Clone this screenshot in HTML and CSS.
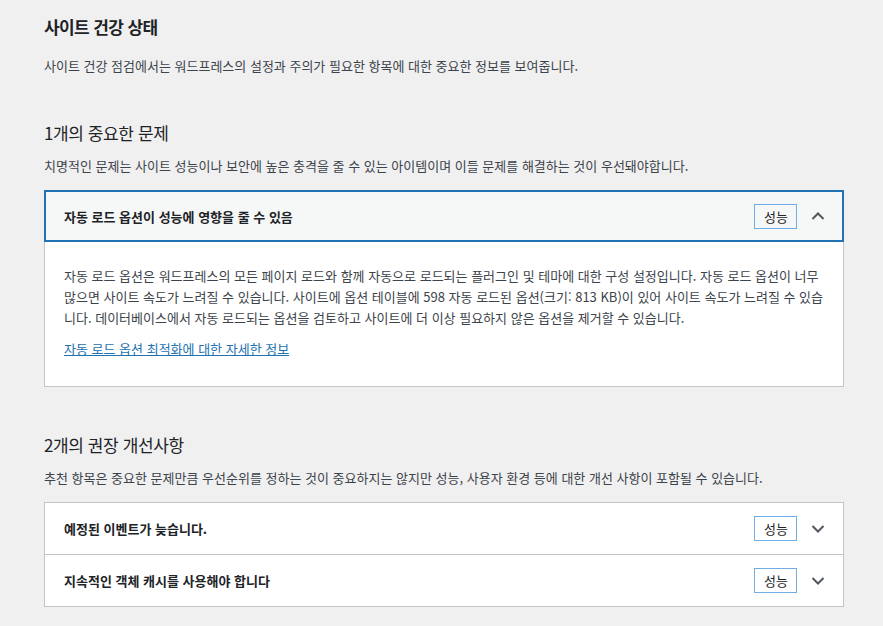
FILE: index.html
```html
<!DOCTYPE html>
<html lang="ko">
<head>
	<meta charset="UTF-8">
	<title>사이트 건강 상태</title>
	<link rel="stylesheet" href="styles.css">
</head>
<body>
	<div class="wrap">
		<h1 class="page-title">사이트 건강 상태</h1>
		<p class="intro">사이트 건강 점검에서는 워드프레스의 설정과 주의가 필요한 항목에 대한 중요한 정보를 보여줍니다.</p>

		<h2 class="section-title">1개의 중요한 문제</h2>
		<p class="section-desc">치명적인 문제는 사이트 성능이나 보안에 높은 충격을 줄 수 있는 아이템이며 이들 문제를 해결하는 것이 우선돼야합니다.</p>
		<div class="accordion">
			<div class="trigger is-focus">
				<span class="title">자동 로드 옵션이 성능에 영향을 줄 수 있음</span>
				<span class="badge">성능</span>
				<svg class="icon" width="14" height="8" viewBox="0 0 14 8"><path d="M1.5 7 L7 1.5 L12.5 7" fill="none" stroke="#50575e" stroke-width="2"/></svg>
			</div>
			<div class="panel">
				<p>자동 로드 옵션은 워드프레스의 모든 페이지 로드와 함께 자동으로 로드되는 플러그인 및 테마에 대한 구성 설정입니다. 자동 로드 옵션이 너무<br>많으면 사이트 속도가 느려질 수 있습니다. 사이트에 옵션 테이블에 598 자동 로드된 옵션(크기: 813 KB)이 있어 사이트 속도가 느려질 수 있습니다. 데이터베이스에서 자동 로드되는 옵션을 검토하고 사이트에 더 이상 필요하지 않은 옵션을 제거할 수 있습니다.</p>
				<p><a href="#">자동 로드 옵션 최적화에 대한 자세한 정보</a></p>
			</div>
		</div>

		<h2 class="section-title second">2개의 권장 개선사항</h2>
		<p class="section-desc">추천 항목은 중요한 문제만큼 우선순위를 정하는 것이 중요하지는 않지만 성능, 사용자 환경 등에 대한 개선 사항이 포함될 수 있습니다.</p>
		<div class="accordion">
			<div class="trigger">
				<span class="title">예정된 이벤트가 늦습니다.</span>
				<span class="badge">성능</span>
				<svg class="icon" width="14" height="8" viewBox="0 0 14 8"><path d="M1.5 1 L7 6.5 L12.5 1" fill="none" stroke="#50575e" stroke-width="2"/></svg>
			</div>
			<div class="trigger">
				<span class="title">지속적인 객체 캐시를 사용해야 합니다</span>
				<span class="badge">성능</span>
				<svg class="icon" width="14" height="8" viewBox="0 0 14 8"><path d="M1.5 1 L7 6.5 L12.5 1" fill="none" stroke="#50575e" stroke-width="2"/></svg>
			</div>
		</div>
	</div>
</body>
</html>
```

FILE: styles.css
```css
body {
	margin: 0;
	background: #f0f0f1;
	color: #3c434a;
	font-family: "Noto Sans CJK KR", "Noto Sans", sans-serif;
	font-size: 13px;
	line-height: 21px;
}
.wrap {
	width: 800px;
	padding: 14px 0 0 44px;
}
.page-title {
	margin: 0;
	font-size: 17px;
	line-height: 25px;
	font-weight: 700;
	color: #1d2327;
	letter-spacing: -0.6px;
}
.intro {
	margin: 16px 0 0;
}
.section-title {
	margin: 45px 0 0;
	font-size: 17px;
	line-height: 24px;
	font-weight: 400;
	color: #1d2327;
	letter-spacing: -0.4px;
}
.section-title.second {
	margin-top: 46px;
}
.section-desc {
	margin: 10px 0 0;
}
.accordion {
	margin-top: 14px;
	border: 1px solid #c3c4c7;
	background: #fff;
}
.trigger {
	display: flex;
	align-items: center;
	height: 51px;
	padding: 0 18px 0 19px;
	border-top: 1px solid #c3c4c7;
}
.trigger:first-child {
	border-top: 0;
}
.trigger.is-focus {
	margin: -1px -1px 0;
	height: 52px;
	box-sizing: border-box;
	padding: 0 17px 0 18px;
	border: 2px solid #2271b1;
	background: #f6f7f7;
}
.trigger .title {
	flex: 1;
	font-weight: 700;
	color: #1d2327;
}
.badge {
	display: inline-block;
	padding: 1px 8px 1px 9px;
	border: 1px solid #72aee6;
	line-height: 21px;
	color: #1d2327;
}
.icon {
	margin-left: 14px;
}
.panel {
	padding: 13px 14px 17px 19px;
}
.panel p {
	margin: 10px 0;
}
.panel a {
	color: #2271b1;
	text-decoration: underline;
}
```
